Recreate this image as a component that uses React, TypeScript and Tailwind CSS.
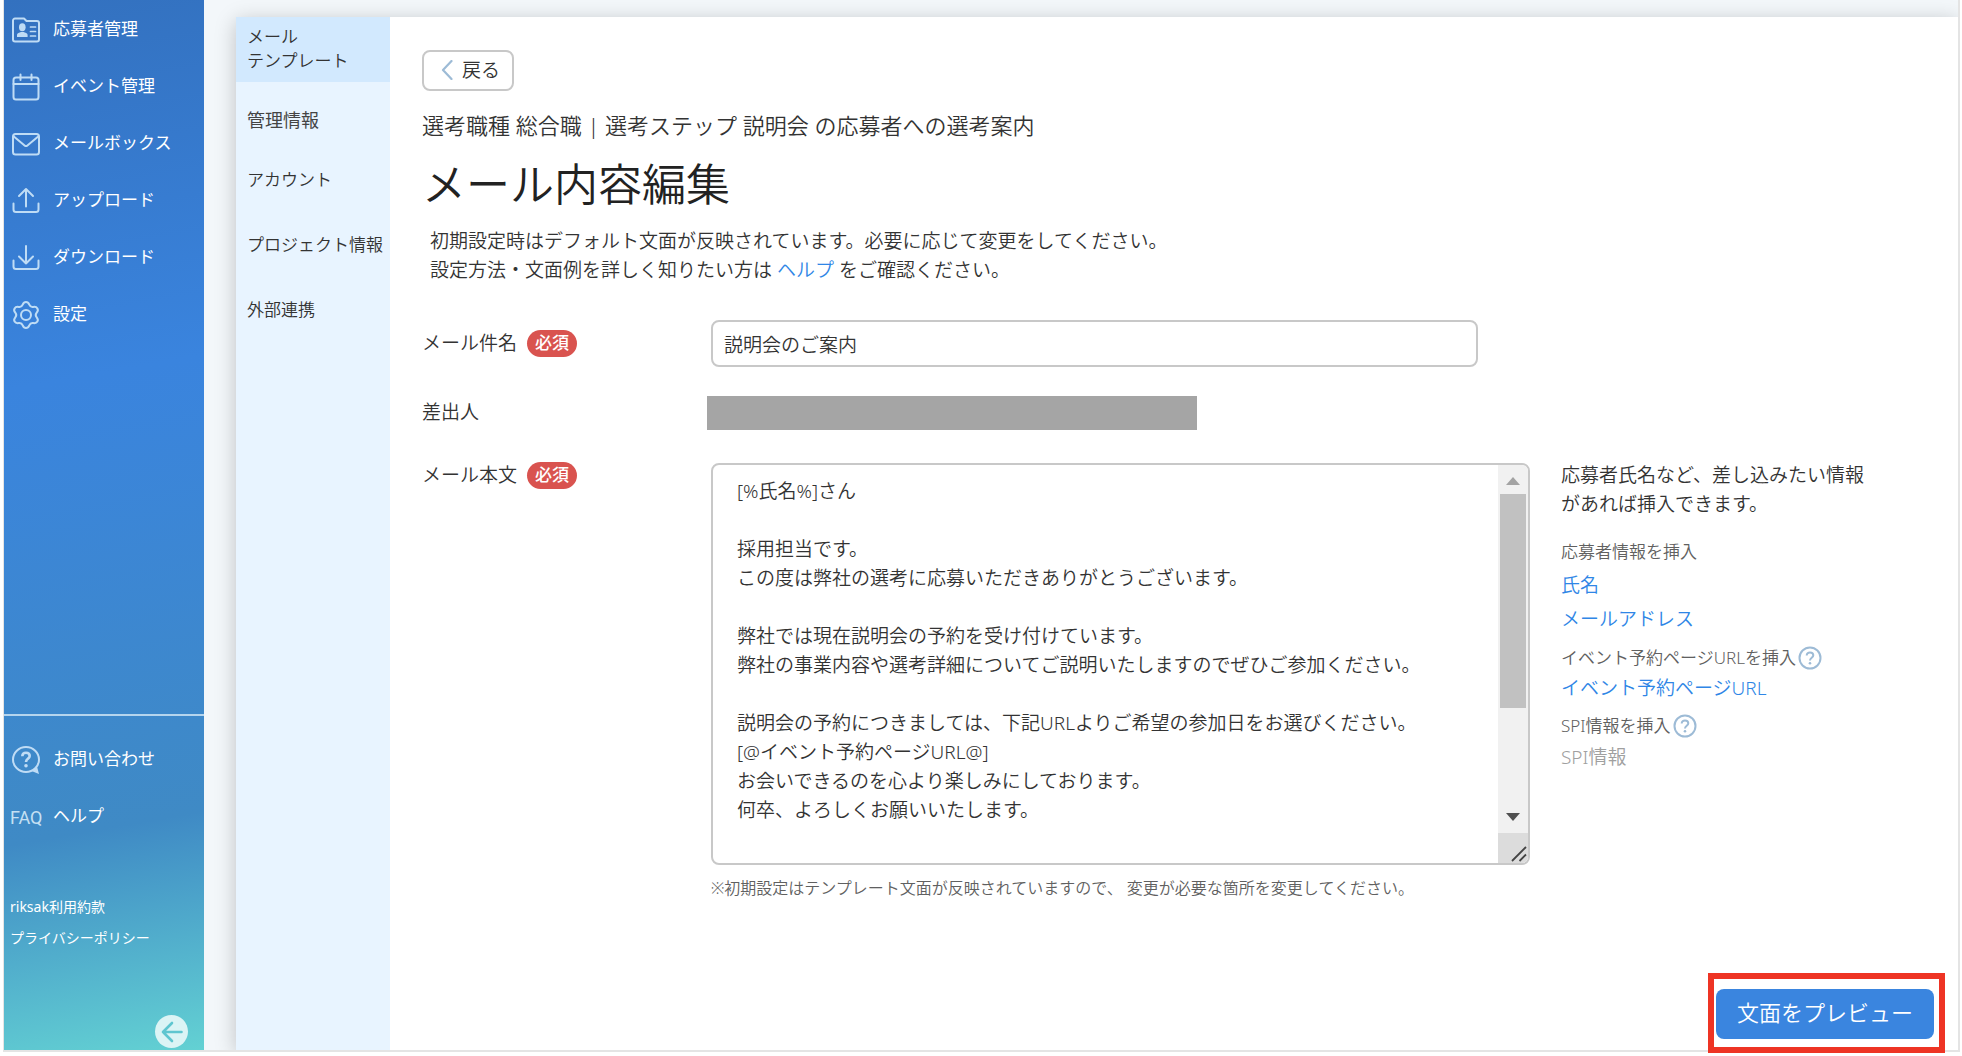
import React from "react";

type IconProps = { className?: string };

const stroke = {
  fill: "none",
  stroke: "currentColor",
  strokeWidth: 2,
  strokeLinecap: "round" as const,
  strokeLinejoin: "round" as const,
};

function ApplicantIcon({ className }: IconProps) {
  return (
    <svg viewBox="0 0 28 28" className={className} {...stroke} aria-hidden="true">
      <path d="M1 4.500A2 2 0 0 1 3 2.500H12L14.500 5H25a2 2 0 0 1 2 2V23.500a2 2 0 0 1-2 2H3a2 2 0 0 1-2-2Z" />
      <g fill="currentColor" stroke="none">
        <ellipse cx="10.300" cy="11.300" rx="3.300" ry="4" />
        <path d="M5 21v-2.300c0-1.600 2.500-2.200 4-2.700h2.600c1.500.5 4 1.100 4 2.700V21Z" />
      </g>
      <path d="M18.500 11h5M18.500 15.500h5M18.500 20h5" strokeWidth="1.700" />
    </svg>
  );
}

function CalendarIcon({ className }: IconProps) {
  return (
    <svg viewBox="0 0 28 28" className={className} {...stroke} aria-hidden="true">
      <rect x="1.500" y="4.500" width="25" height="22" rx="2.500" />
      <path d="M1.500 11h25M8.500 1.500V7M19.500 1.500V7" />
    </svg>
  );
}

function MailIcon({ className }: IconProps) {
  return (
    <svg viewBox="0 0 28 28" className={className} {...stroke} aria-hidden="true">
      <rect x="1" y="4" width="26" height="20.500" rx="2.500" />
      <path d="M1.800 6.500 12.600 15.500a2.200 2.200 0 0 0 2.800 0L26.200 6.500" />
    </svg>
  );
}

function UploadIcon({ className }: IconProps) {
  return (
    <svg viewBox="0 0 28 28" className={className} {...stroke} aria-hidden="true">
      <path d="M14 19.500V2M7 9l7-7 7 7M1.500 16.500V22.500a2.500 2.500 0 0 0 2.500 2.500H24a2.500 2.500 0 0 0 2.500-2.500V16.500" />
    </svg>
  );
}

function DownloadIcon({ className }: IconProps) {
  return (
    <svg viewBox="0 0 28 28" className={className} {...stroke} aria-hidden="true">
      <path d="M14 2V19.500M7 12.500l7 7 7-7M1.500 16.500V22.500a2.500 2.500 0 0 0 2.500 2.500H24a2.500 2.500 0 0 0 2.500-2.500V16.500" />
    </svg>
  );
}

function GearIcon({ className }: IconProps) {
  return (
    <svg viewBox="0 0 28 28" className={className} {...stroke} aria-hidden="true">
      <path d="M14 1c1.900 0 2.700 1.200 3.300 2.700.7 1.700 2.100 2.500 3.900 2.200 1.800-.3 3.300-.1 4.200 1.500 1 1.700.4 3-.7 4.300-1.200 1.400-1.200 3.200 0 4.600 1.100 1.300 1.700 2.600.7 4.300-.9 1.600-2.400 1.800-4.200 1.500-1.800-.3-3.200.5-3.900 2.200C16.700 25.800 15.900 27 14 27s-2.700-1.200-3.300-2.700c-.7-1.700-2.100-2.500-3.900-2.200-1.800.3-3.300.1-4.200-1.500-1-1.700-.4-3 .7-4.300 1.200-1.400 1.200-3.200 0-4.600C2.200 10.400 1.600 9.100 2.600 7.400c.9-1.600 2.400-1.800 4.200-1.500 1.800.3 3.200-.5 3.900-2.200C11.300 2.200 12.100 1 14 1Z" />
      <circle cx="14" cy="14" r="5" />
    </svg>
  );
}

function ContactIcon({ className }: IconProps) {
  return (
    <svg viewBox="0 0 28 28" className={className} {...stroke} aria-hidden="true">
      <ellipse cx="14" cy="13.500" rx="13" ry="12.500" />
      <path d="M19.500 25 25 20.500 27 28Z" fill="currentColor" stroke="none" />
      <path
        d="M10.300 10.200c0-2.100 1.500-3.400 3.700-3.400s3.700 1.200 3.700 3.200c0 2.800-3.700 2.900-3.700 5.900"
        strokeWidth="2.600"
        strokeLinecap="butt"
      />
      <circle cx="14" cy="19.800" r="1.800" fill="currentColor" stroke="none" />
    </svg>
  );
}

function HelpIcon() {
  return (
    <svg viewBox="0 0 24 24" className="size-6" {...stroke} aria-hidden="true">
      <circle cx="12" cy="12" r="10.500" />
      <path d="M8.700 9.500c0-1.900 1.400-3.100 3.300-3.100s3.300 1.200 3.300 2.900c0 2.400-3.300 2.500-3.300 5.100" strokeLinecap="butt" />
      <circle cx="12" cy="17.200" r="1.300" fill="currentColor" stroke="none" />
    </svg>
  );
}

const navItems = [
  { label: "応募者管理", Icon: ApplicantIcon },
  { label: "イベント管理", Icon: CalendarIcon },
  { label: "メールボックス", Icon: MailIcon },
  { label: "アップロード", Icon: UploadIcon },
  { label: "ダウンロード", Icon: DownloadIcon },
  { label: "設定", Icon: GearIcon },
];

function Sidebar() {
  return (
    <aside className="flex w-[200px] shrink-0 flex-col bg-[linear-gradient(170deg,#3371bf_0%,#3a84de_36%,#3f8ac5_78%,#63d1d3_100%)] font-normal text-white">
      <nav className="flex flex-col">
        {navItems.map(({ label, Icon }) => (
          <a key={label} href="#" className="flex h-[57px] items-center gap-[13px] pl-2 text-[17px] leading-6">
            <Icon className="mt-[2px] size-7 shrink-0 text-[#bfdcf5]" />
            {label}
          </a>
        ))}
      </nav>
      <div className="mt-auto border-t-2 border-[#b5d5ee] pt-[14px]">
        <a href="#" className="flex h-[57px] items-center gap-[13px] pl-2 text-[17px] leading-6">
          <ContactIcon className="mt-[2px] size-7 shrink-0 text-[#bfdcf5]" />
          お問い合わせ
        </a>
        <a href="#" className="flex h-[57px] items-center pl-[6px] text-[17px] leading-6">
          <span className="mt-1 w-[43px] font-[Roboto] text-lg text-[#c5e0f3]">FAQ</span>
          ヘルプ
        </a>
      </div>
      <div className="mt-[51px] flex flex-col gap-[7px] pl-[6px] text-sm leading-6">
        <a href="#">riksak利用約款</a>
        <a href="#">プライバシーポリシー</a>
      </div>
      <button
        type="button"
        aria-label="メニューを閉じる"
        className="mt-[65px] mr-4 mb-[2px] flex size-[33px] items-center justify-center self-end rounded-full bg-[#dbf4f5] text-[#5fc6d0]"
      >
        <svg viewBox="0 0 24 24" className="size-6" {...stroke} strokeWidth={2.600} aria-hidden="true">
          <path d="M21.500 12H3M12 3 3 12l9 9" />
        </svg>
      </button>
    </aside>
  );
}

function SubMenu() {
  return (
    <nav className="flex w-[154px] shrink-0 flex-col bg-[#e8f4ff] text-[#333]">
      <a href="#" aria-current="page" className="h-[65px] bg-[#d2e9fe] pt-2 pl-[11px] text-[17px] leading-6">
        メール
        <br />
        テンプレート
      </a>
      <a href="#" className="mt-[26px] pl-[11px] text-lg leading-6 font-normal text-[#444]">管理情報</a>
      <a href="#" className="mt-9 pl-[11px] text-[17px] leading-6">アカウント</a>
      <a href="#" className="mt-[41px] pl-[11px] text-[17px] leading-6 whitespace-nowrap">プロジェクト情報</a>
      <a href="#" className="mt-[41px] pl-[11px] text-[17px] leading-6">外部連携</a>
    </nav>
  );
}

function Required() {
  return (
    <span className="flex h-[27px] w-[50px] items-center justify-center rounded-full bg-[#d9534f] pb-px text-[17px] leading-6 font-medium text-white">
      必須
    </span>
  );
}

const bodyText = `[%氏名%]さん

採用担当です。
この度は弊社の選考に応募いただきありがとうございます。

弊社では現在説明会の予約を受け付けています。
弊社の事業内容や選考詳細についてご説明いたしますのでぜひご参加ください。

説明会の予約につきましては、下記URLよりご希望の参加日をお選びください。
[@イベント予約ページURL@]
お会いできるのを心より楽しみにしております。
何卒、よろしくお願いいたします。
`;

function BodyField() {
  return (
    <div className="flex h-[402px] overflow-hidden rounded-lg border-2 border-[#c8c8c8] bg-white">
      <textarea
        id="body"
        defaultValue={bodyText}
        className="min-w-0 flex-1 resize-none overflow-hidden pt-[12px] pl-6 text-[19px] leading-[29px] outline-none"
      />
      <div className="flex w-[30px] flex-col items-center bg-[#f1f1f1]" aria-hidden="true">
        <svg viewBox="0 0 14 8" className="mt-3 h-2 w-[14px] fill-[#a3a3a3]">
          <path d="M7 0 14 8H0Z" />
        </svg>
        <div className="mt-[9px] h-[214px] w-[26px] bg-[#c1c1c1]" />
        <svg viewBox="0 0 14 8" className="mt-auto mb-3 h-2 w-[14px] fill-[#505050]">
          <path d="M0 0H14L7 8Z" />
        </svg>
        <div className="flex h-[30px] w-full items-end justify-end bg-[#dcdcdc]">
          <svg viewBox="0 0 18 18" className="size-[18px] fill-none stroke-[#444]" strokeWidth="1.800">
            <path d="M2 16 16 2M9.500 16 16 9.500" />
          </svg>
        </div>
      </div>
    </div>
  );
}

function InsertPanel() {
  return (
    <div className="flex flex-col items-start pl-[31px] text-[17px] leading-6 whitespace-nowrap text-[#606060]">
      <p className="-mt-[2px] text-[19px] leading-[29px] text-[#333]">
        応募者氏名など、差し込みたい情報
        <br />
        があれば挿入できます。
      </p>
      <p className="mt-[21px]">応募者情報を挿入</p>
      <button type="button" className="mt-2 text-[19px] leading-[26px] text-[#2f86e6]">氏名</button>
      <button type="button" className="mt-2 text-[19px] leading-[26px] text-[#2f86e6]">メールアドレス</button>
      <p className="mt-[14px] flex items-center gap-[2px]">
        イベント予約ページURLを挿入
        <span className="text-[#9dbbd6]"><HelpIcon /></span>
      </p>
      <button type="button" className="mt-[5px] text-[19px] leading-[26px] text-[#2f86e6]">イベント予約ページURL</button>
      <p className="mt-[13px] flex items-center gap-[2px]">
        SPI情報を挿入
        <span className="text-[#9dbbd6]"><HelpIcon /></span>
      </p>
      <button type="button" disabled className="mt-[6px] text-[19px] leading-[26px] text-[#a0a0a0]">SPI情報</button>
    </div>
  );
}

function Editor() {
  return (
    <main className="flex min-w-0 flex-1 flex-col pt-[33px] pl-8 text-[19px] leading-[29px] text-[#333]">
      <button
        type="button"
        className="flex h-[41px] w-[92px] items-center gap-[9px] rounded-lg border-2 border-[#c8c8c8] pb-px pl-[17px]"
      >
        <svg viewBox="0 0 12 20" className="h-5 w-3" {...stroke} stroke="#9dbbd6" strokeWidth={2.200} aria-hidden="true">
          <path d="M10.500 1 2 10l8.500 9" />
        </svg>
        戻る
      </button>
      <p className="mt-[18px] text-[22px] leading-8">
        選考職種 総合職 | 選考ステップ 説明会 の応募者への選考案内
      </p>
      <h1 className="mt-[13px] text-[44px] leading-[60px] text-[#222]">メール内容編集</h1>
      <p className="mt-[13px] pl-2">
        初期設定時はデフォルト文面が反映されています。必要に応じて変更をしてください。
        <br />
        設定方法・文面例を詳しく知りたい方は <a href="#" className="text-[#2f86e6]">ヘルプ</a> をご確認ください。
      </p>

      <form className="mt-[35px] grid grid-cols-[289px_minmax(0,819px)_1fr]">
        <label htmlFor="subject" className="flex h-[47px] items-center gap-[10px]">
          メール件名
          <Required />
        </label>
        <input
          id="subject"
          type="text"
          defaultValue="説明会のご案内"
          className="h-[47px] w-full max-w-[767px] rounded-lg border-2 border-[#c8c8c8] px-[11px] outline-none"
        />
        <div />

        <span className="mt-7 flex h-[34px] items-center">差出人</span>
        <div className="mt-[29px] -ml-1 h-[34px] max-w-[490px] bg-[#a5a5a5]" />
        <div />

        <label htmlFor="body" className="mt-8 flex h-[27px] items-center gap-[10px] self-start">
          メール本文
          <Required />
        </label>
        <div className="mt-[33px]">
          <BodyField />
          <p className="mt-[11px] text-base leading-6 text-[#606060]">
            ※初期設定はテンプレート文面が反映されていますので、 変更が必要な箇所を変更してください。
          </p>
        </div>
        <div className="mt-[33px]">
          <InsertPanel />
        </div>
      </form>

      <div className="mt-auto mr-[13px] -mb-[3px] self-end border-[6px] border-[#ee3424] pt-[10px] pr-[5px] pb-2 pl-[2px]">
        <button
          type="button"
          className="h-[50px] w-[218px] rounded-lg bg-[#3a85df] pb-1 text-[22px] leading-8 text-white"
        >
          文面をプレビュー
        </button>
      </div>
    </main>
  );
}

export default function App() {
  return (
    <div className="flex min-h-screen bg-white pr-[2px] pb-1 pl-[3px] font-['Noto_Sans','Noto_Sans_CJK_JP',sans-serif] font-[350]">
      <div className="flex flex-1 border-r-2 border-b-2 border-l border-[#e4e4e4] bg-[#f3f7fa]">
        <Sidebar />
        <div className="flex min-w-0 flex-1 pt-[17px] pl-8">
          <div className="relative flex min-w-0 flex-1">
            <div className="absolute inset-0 bg-white shadow-[0_4px_20px_rgba(0,0,0,0.22)] [clip-path:inset(-17px_0_0_-32px)]" />
            <div className="relative flex min-w-0 flex-1">
              <SubMenu />
              <Editor />
            </div>
          </div>
        </div>
      </div>
    </div>
  );
}
